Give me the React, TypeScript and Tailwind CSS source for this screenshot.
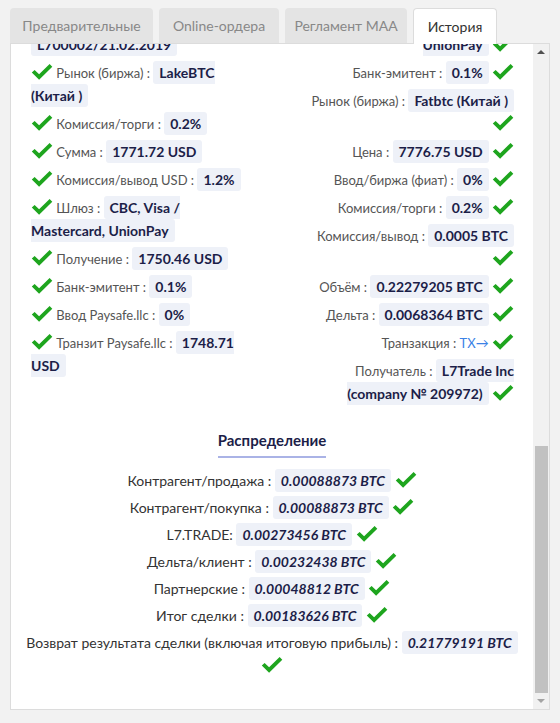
import { useLayoutEffect, useRef } from "react";

type Row = { label: string; value?: string; link?: string };

const tabs = [
  { name: "Предварительные", width: "w-[143px]" },
  { name: "Online-ордера", width: "w-[120px]" },
  { name: "Регламент МАА", width: "w-[122px]" },
  { name: "История", width: "w-[84px]" },
];

const leftRows: Row[] = [
  { label: "Клиент", value: "ID 40127" },
  { label: "Тип сделки", value: "Покупка BTC" },
  { label: "Статус", value: "Исполнена" },
  { label: "Номер/дата", value: "L700002/21.02.2019" },
  { label: "Рынок (биржа)", value: "LakeBTC (Китай )" },
  { label: "Комиссия/торги", value: "0.2%" },
  { label: "Сумма", value: "1771.72 USD" },
  { label: "Комиссия/вывод USD", value: "1.2%" },
  { label: "Шлюз", value: "CBC, Visa / Mastercard, UnionPay" },
  { label: "Получение", value: "1750.46 USD" },
  { label: "Банк-эмитент", value: "0.1%" },
  { label: "Ввод Paysafe.llc", value: "0%" },
  { label: "Транзит Paysafe.llc", value: "1748.71 USD" },
];

const rightRows: Row[] = [
  { label: "Дата", value: "21.02.2019" },
  { label: "Валюта", value: "USD" },
  { label: "Счёт", value: "EU-58213" },
  { label: "Шлюз", value: "CBC, Visa / Mastercard, UnionPay" },
  { label: "Банк-эмитент", value: "0.1%" },
  { label: "Рынок (биржа)", value: "Fatbtc (Китай )" },
  { label: "Цена", value: "7776.75 USD" },
  { label: "Ввод/биржа (фиат)", value: "0%" },
  { label: "Комиссия/торги", value: "0.2%" },
  { label: "Комиссия/вывод", value: "0.0005 BTC" },
  { label: "Объём", value: "0.22279205 BTC" },
  { label: "Дельта", value: "0.0068364 BTC" },
  { label: "Транзакция", link: "TX→" },
  { label: "Получатель", value: "L7Trade Inc (company № 209972)" },
];

const split: Row[] = [
  { label: "Контрагент/продажа :", value: "0.00088873 BTC" },
  { label: "Контрагент/покупка :", value: "0.00088873 BTC" },
  { label: "L7.TRADE:", value: "0.00273456 BTC" },
  { label: "Дельта/клиент :", value: "0.00232438 BTC" },
  { label: "Партнерские :", value: "0.00048812 BTC" },
  { label: "Итог сделки :", value: "0.00183626 BTC" },
  { label: "Возврат результата сделки (включая итоговую прибыль) :", value: "0.21779191 BTC" },
];

const Check = () => (
  <svg viewBox="0 0 22 18" className="inline-block h-[18px] w-[22px] align-[-3px]" fill="#1ea51e">
    <path d="M0.8 9.6 3.6 6.9 8.1 11.2 18.6 1 21.3 3.7 8.1 16.8Z" />
  </svg>
);

const Value = ({ children, italic }: { children: string; italic?: boolean }) => (
  <span
    className={`rounded-[3px] bg-[#eef1f8] px-[6px] py-[3px] text-[14px] leading-[16px] font-bold text-[#1c1e48] ${
      italic ? "italic" : ""
    }`}
  >
    {children}
  </span>
);

const Entry = () => (
  <div className="pb-[28px]">
    <div className="flex justify-between pl-[11px] pr-[10px] text-[13px] leading-[23px]">
      <div className="w-[222px]">
        {leftRows.map((row) => (
          <div key={row.label} className="mb-[5px]">
            <Check /> <span className="text-[#555]">{row.label} :</span>{" "}
            {row.value && <Value>{row.value}</Value>}
          </div>
        ))}
      </div>
      <div className="w-[212px] text-right">
        {rightRows.map((row) => (
          <div key={row.label} className="mb-[5px]">
            <span className="text-[#555]">{row.label} :</span>{" "}
            {row.value && <Value>{row.value}</Value>}
            {row.link && <span className="text-[#3b82e6]">{row.link}</span>} <Check />
          </div>
        ))}
      </div>
    </div>

    <div className="mt-[18px] flex flex-col items-center">
      <h3 className="border-b-2 border-[#aab3e6] pb-[5px] text-[15px] leading-[22px] font-bold text-[#1c1e48]">
        Распределение
      </h3>
      <div className="mt-[11px] w-full text-center text-[14px] leading-[23px] text-[#333]">
        {split.map((row) => (
          <div key={row.label} className="mb-[4px]">
            {row.label} <Value italic>{row.value!}</Value> <Check />
          </div>
        ))}
      </div>
    </div>
  </div>
);

const Scrollbar = () => (
  <div className="flex w-[16px] flex-col bg-[#f1f1f1]">
    <div className="flex h-[15px] items-center justify-center">
      <div className="h-0 w-0 border-x-[4px] border-b-[4px] border-x-transparent border-b-[#505050]" />
    </div>
    <div className="flex flex-1 flex-col justify-end pl-[2px] pr-[1px]">
      <div className="h-[247px] bg-[#c1c1c1]" />
    </div>
    <div className="flex h-[16px] items-center justify-center">
      <div className="h-0 w-0 border-x-[4px] border-t-[4px] border-x-transparent border-t-[#a3a3a3]" />
    </div>
  </div>
);

export default function App() {
  const scrollRef = useRef<HTMLDivElement>(null);

  useLayoutEffect(() => {
    const el = scrollRef.current;
    if (el) el.scrollTop = el.scrollHeight;
  }, []);

  return (
    <div className="min-h-[723px] bg-[#f2f2f2] px-[10px] pt-2 font-['Lato',sans-serif]">
      <div className="flex gap-[6px]">
        {tabs.map((tab) => {
          const active = tab.name === "История";
          return (
            <div
              key={tab.name}
              className={`relative z-10 rounded-t-[4px] pt-[9px] pb-[8px] text-center text-[14px] leading-[18px] ${tab.width} ${
                active
                  ? "-mb-px border border-b-0 border-[#dcdcdc] bg-white text-[#333]"
                  : "bg-[#e4e4e4] text-[#888]"
              }`}
            >
              {tab.name}
            </div>
          );
        })}
      </div>
      <div className="flex w-[540px] border border-[#dcdcdc] bg-white">
        <div ref={scrollRef} className="h-[665px] flex-1 overflow-y-scroll px-[9px] [scrollbar-width:none]">
          <Entry />
          <Entry />
        </div>
        <Scrollbar />
      </div>
    </div>
  );
}
